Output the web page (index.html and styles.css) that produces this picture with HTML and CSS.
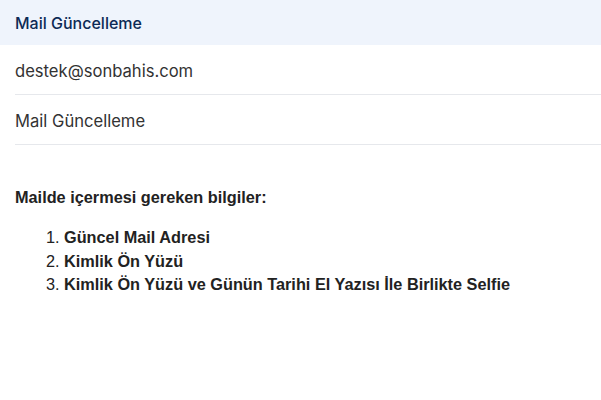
FILE: index.html
```html
<!DOCTYPE html>
<html lang="tr">
<head>
<meta charset="utf-8">
<link rel="stylesheet" href="styles.css">
</head>
<body>
<div class="header">Mail Güncelleme</div>
<div class="rows">
  <div class="row">destek@sonbahis.com</div>
  <div class="row">Mail Güncelleme</div>
</div>
<div class="content">
  <p class="lead">Mailde içermesi gereken bilgiler:</p>
  <ol class="list">
    <li><strong>Güncel Mail Adresi</strong></li>
    <li><strong>Kimlik Ön Yüzü</strong></li>
    <li><strong>Kimlik Ön Yüzü ve Günün Tarihi El Yazısı İle Birlikte Selfie</strong></li>
  </ol>
</div>
</body>
</html>
```
FILE: styles.css
```css
html, body {
  margin: 0;
  padding: 0;
  background: #fff;
}
body {
  font-family: Inter, "Noto Sans", sans-serif;
}
.header {
  height: 45px;
  display: flex;
  align-items: center;
  padding-left: 15px;
  background: #eff4fc;
  color: #0c2a55;
  font-size: 16px;
  font-weight: 460;
}
.rows {
  padding-left: 15px;
}
.row {
  display: flex;
  align-items: center;
  padding-top: 2px;
  box-sizing: border-box;
  height: 50px;
  border-bottom: 1px solid #e6e8ec;
  color: #333;
  font-size: 16.6px;
}
.content {
  padding: 0 15px;
  font-family: "Liberation Sans", Arial, sans-serif;
  font-size: 16.3px;
  color: #222;
}
.lead {
  margin: 40px 0 0;
  font-weight: bold;
  line-height: 24px;
}
.list {
  margin: 17px 0 0;
  padding-left: 49px;
  line-height: 23.5px;
}
.list strong {
  font-weight: bold;
}
```
